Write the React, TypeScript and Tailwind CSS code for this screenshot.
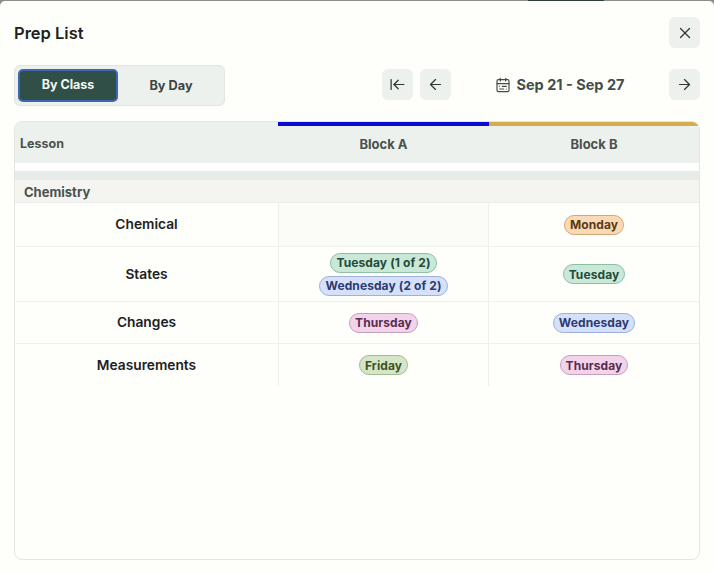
import { ArrowLeft, ArrowRight, ArrowLeftToLine, CalendarRange, X } from 'lucide-react';
import type { ReactNode } from 'react';

const font = "font-['Inter','Liberation_Sans',sans-serif]";

const chipStyles = {
  orange: 'bg-[#fbd9b5] border-[#d3a877] text-[#5c3a16]',
  green: 'bg-[#c9e8d8] border-[#8dbfa5] text-[#234a3a]',
  blue: 'bg-[#d5e0fa] border-[#9fb0dc] text-[#2b3a70]',
  pink: 'bg-[#f2d3ea] border-[#c79fbd] text-[#5a2c50]',
  lime: 'bg-[#d5e6c8] border-[#a3bd90] text-[#3d5226]',
};

const Chip = ({ color, children }: { color: keyof typeof chipStyles; children: ReactNode }) => (
  <span
    className={`inline-flex h-[20px] items-center whitespace-nowrap rounded-full border px-[5px] pt-px text-[12px] leading-none font-bold tracking-[0.1px] ${chipStyles[color]}`}
  >
    {children}
  </span>
);

const IconButton = ({ children }: { children: ReactNode }) => (
  <button className="flex size-[31px] items-center justify-center rounded-[6px] bg-[#edf1ee] text-[#2f3733]">
    {children}
  </button>
);

const Row = ({
  name,
  a,
  b,
  h,
  emptyA,
}: {
  name: string;
  a?: ReactNode;
  b: ReactNode;
  h: string;
  emptyA?: boolean;
}) => (
  <div className={`flex border-b border-[#f0f1ee] last:border-b-0 ${h}`}>
    <div className="flex w-[264px] items-center justify-center border-r border-[#eeefec] text-[13.75px] font-semibold text-[#1d211f]">
      {name}
    </div>
    <div
      className={`flex w-[210px] flex-col items-center justify-center gap-[3px] border-r border-[#eeefec] ${emptyA ? 'bg-[#fbfbf8]' : ''}`}
    >
      {a}
    </div>
    <div className="flex flex-1 items-center justify-center">{b}</div>
  </div>
);

export default function App() {
  return (
    <div className={`flex h-[573px] w-[714px] flex-col overflow-hidden bg-[#8a8d8a] ${font}`}>
      {/* sliver of the page behind the modal */}
      <div className="flex h-px shrink-0">
        <div className="w-[528px]" />
        <div className="w-[76px] bg-[#2f3d38]" />
      </div>
      <div className="flex flex-1 flex-col rounded-t-[5px] bg-[#fefefa] px-[14px]">
        <div className="mb-px flex h-[63px] items-center justify-between">
          <h1 className="pt-[2px] text-[16.5px] font-semibold text-[#1d211f]">Prep List</h1>
          <IconButton>
            <X size={18} strokeWidth={1.75} />
          </IconButton>
        </div>

        <div className="flex h-[41px] items-center justify-between">
          <div className="flex h-[41px] w-[211px] items-center gap-[1px] rounded-[6px] border border-[#e1e5e1] bg-[#edf1ee] p-[3px]">
            <button className="h-[33px] w-[100px] rounded-[5px] border-2 border-[#3d66b5] bg-[#2f4f47] text-[12.5px] font-bold text-[#f4f6f3]">
              By Class
            </button>
            <button className="h-[33px] flex-1 pl-[2px] text-[12.75px] font-bold text-[#3d4541]">
              By Day
            </button>
          </div>
          <div className="flex items-center pb-[2px]">
            <IconButton>
              <ArrowLeftToLine size={17} strokeWidth={1.75} />
            </IconButton>
            <div className="ml-[7px]">
              <IconButton>
                <ArrowLeft size={17} strokeWidth={1.75} />
              </IconButton>
            </div>
            <div className="flex w-[218px] items-center justify-center gap-[5px] text-[#444c47]">
              <CalendarRange size={16} strokeWidth={1.75} />
              <span className="text-[14.5px] font-bold">Sep 21 - Sep 27</span>
            </div>
            <IconButton>
              <ArrowRight size={17} strokeWidth={1.75} />
            </IconButton>
          </div>
        </div>

        <div className="mt-[15px] mb-[13px] flex-1 overflow-hidden rounded-[8px] border border-[#e4e6e2]">
          <div className="flex h-[41px] bg-[#edf1ee] font-bold text-[#4a524d]">
            <div className="flex w-[263px] items-center pt-[3px] pl-[5px] text-[12.5px]">Lesson</div>
            <div className="flex w-[211px] items-center justify-center border-t-[4px] border-[#0a0ad0] text-[13px]">
              Block A
            </div>
            <div className="flex flex-1 items-center justify-center border-t-[4px] border-[#d4ae4e] text-[13px]">
              Block B
            </div>
          </div>
          <div className="h-[8px] bg-white" />
          <div className="h-[9px] bg-[#e8ece8]" />
          <div className="flex h-[23px] items-center border-b border-[#ecedea] bg-[#f4f4f1] pt-[3px] pl-[9px] text-[13px] font-bold text-[#4a524d]">
            Chemistry
          </div>
          <Row name="Chemical" h="h-[44px]" emptyA b={<Chip color="orange">Monday</Chip>} />
          <Row
            name="States"
            h="h-[55px]"
            a={
              <>
                <Chip color="green">Tuesday (1 of 2)</Chip>
                <Chip color="blue">Wednesday (2 of 2)</Chip>
              </>
            }
            b={<Chip color="green">Tuesday</Chip>}
          />
          <Row
            name="Changes"
            h="h-[42px]"
            a={<Chip color="pink">Thursday</Chip>}
            b={<Chip color="blue">Wednesday</Chip>}
          />
          <Row
            name="Measurements"
            h="h-[42px]"
            a={<Chip color="lime">Friday</Chip>}
            b={<Chip color="pink">Thursday</Chip>}
          />
        </div>
      </div>
    </div>
  );
}
